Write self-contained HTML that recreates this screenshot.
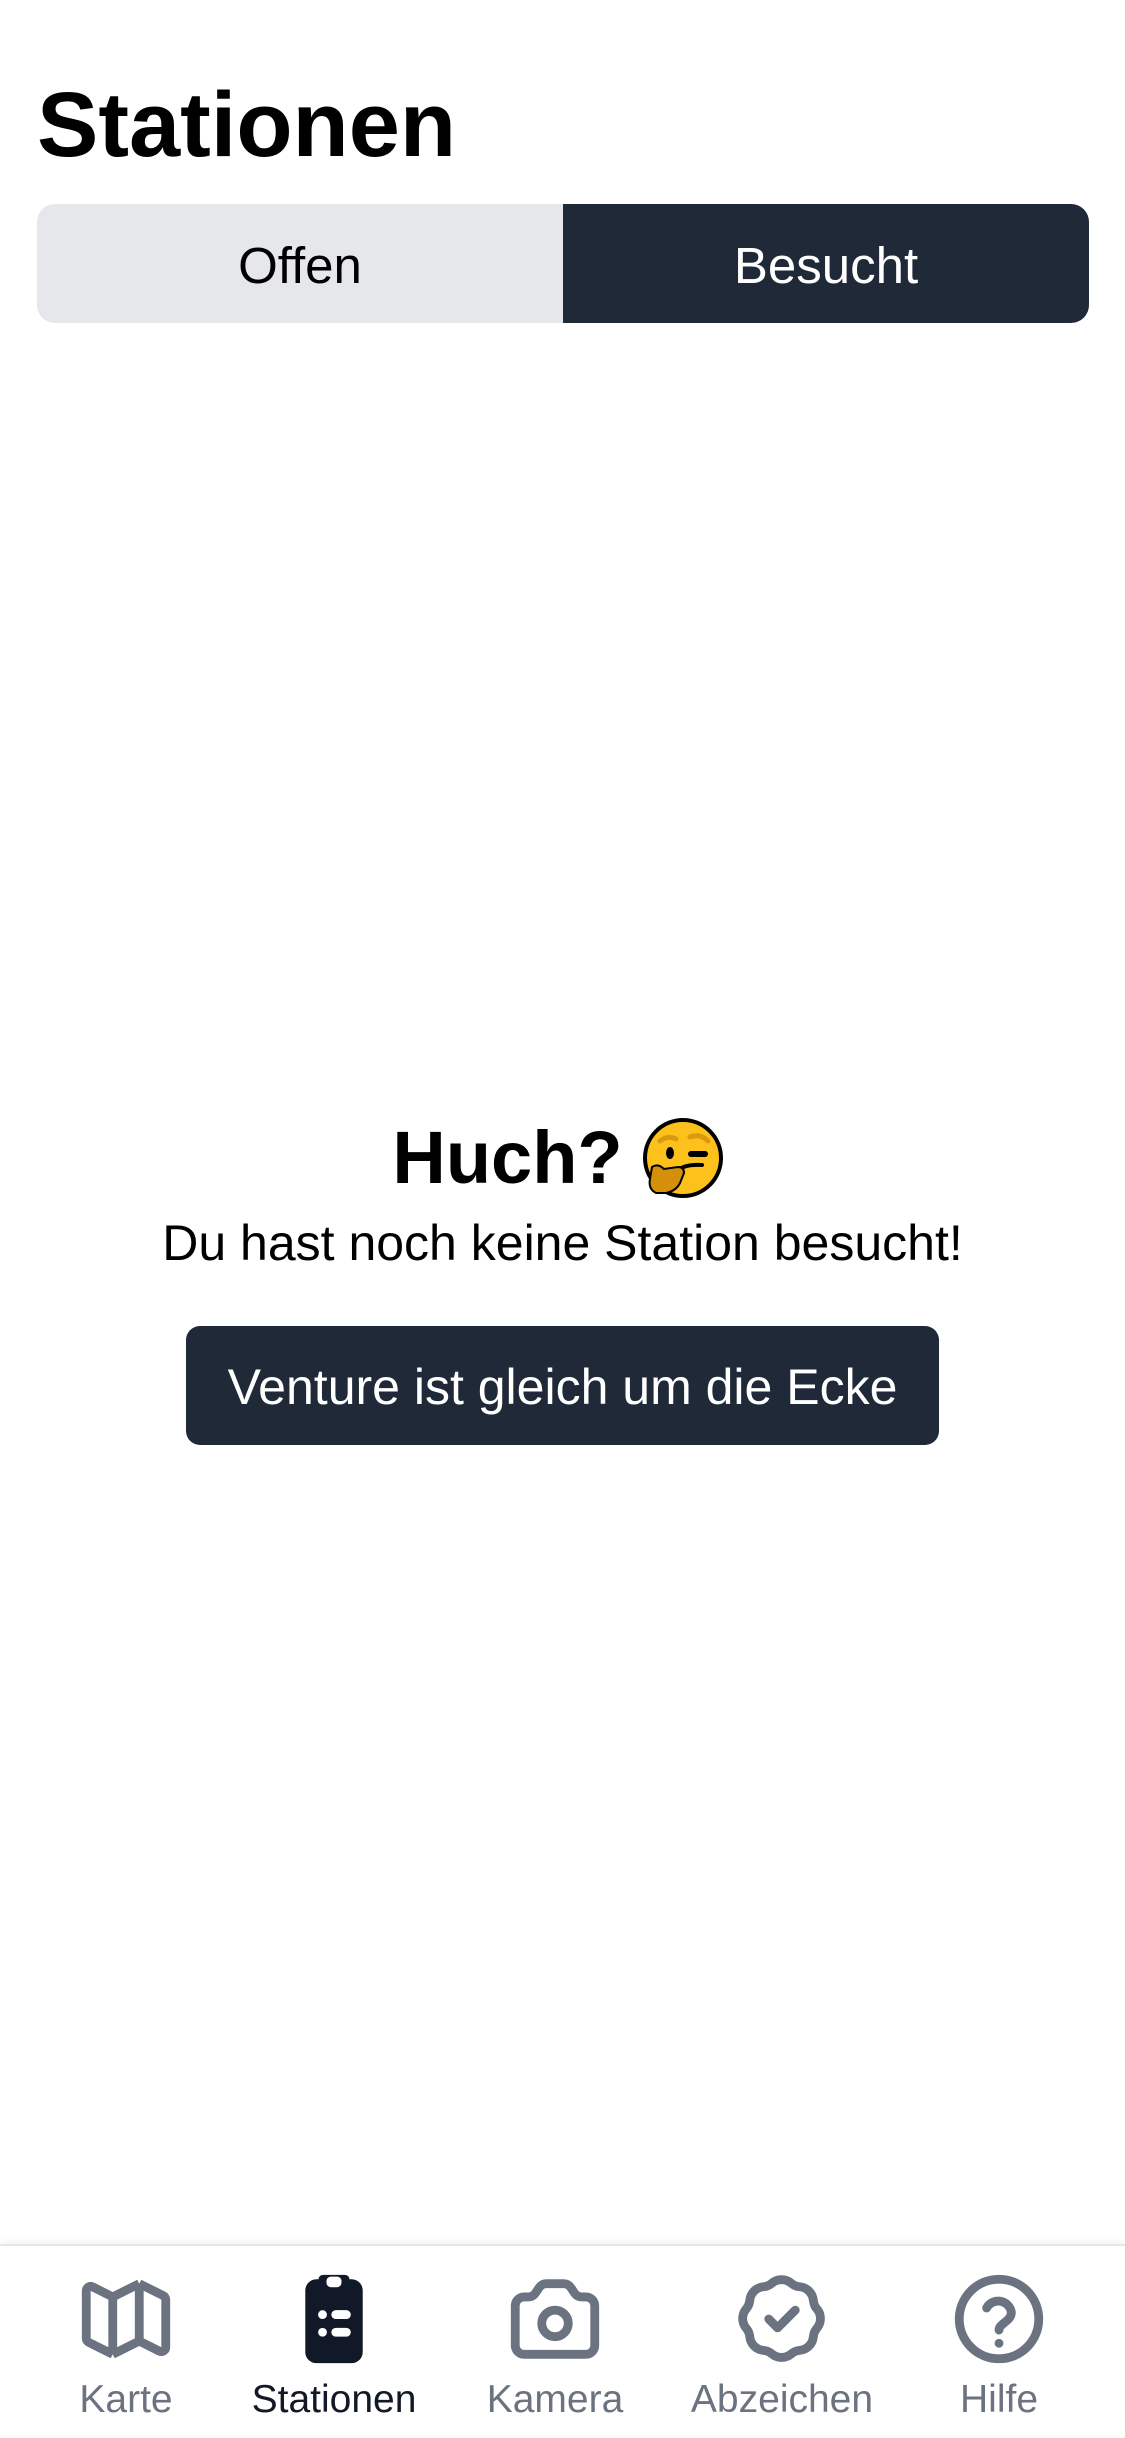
<!DOCTYPE html>
<html><head><meta charset="utf-8"><style>
html,body{margin:0;padding:0;background:#fff;}
body{width:1125px;height:2436px;position:relative;overflow:hidden;font-family:"Liberation Sans",sans-serif;}
.abs{position:absolute;}
h1{position:absolute;left:37px;top:70px;margin:0;font-size:92px;font-weight:bold;color:#000;line-height:110px;}
.seg{position:absolute;left:37px;top:204px;width:1052px;height:119px;border-radius:18px;overflow:hidden;background:#e5e7eb;}
.seg div{position:absolute;top:0;height:119px;line-height:124px;text-align:center;font-size:51px;}
.huch{position:absolute;left:0;width:1125px;top:1118px;text-align:center;font-size:74px;font-weight:bold;line-height:80px;}
.sub{position:absolute;left:0;width:1125px;top:1215px;text-align:center;font-size:50px;line-height:56px;color:#000;}
.btn{position:absolute;left:186px;top:1326px;width:753px;height:119px;background:#1f2937;border-radius:14px;color:#fff;font-size:50px;line-height:122px;text-align:center;}
.nav{position:absolute;left:0;top:2244px;width:1125px;height:192px;border-top:2px solid #e5e7eb;box-shadow:0 -2px 6px rgba(0,0,0,0.06);}
.item{position:absolute;top:20px;width:240px;margin-left:-120px;text-align:center;color:#6b7280;font-size:39px;}
.item svg{display:block;margin:0 auto;}
.item span{display:block;margin-top:6px;}
</style></head><body>
<h1>Stationen</h1>
<div class="seg">
<div style="left:0;width:526px;color:#000;">Offen</div>
<div style="left:526px;width:526px;background:#1f2937;color:#fff;">Besucht</div>
</div>
<div class="huch"><span style="position:relative;left:-55px;">Huch?</span></div>
<svg class="abs" style="left:640px;top:1115px" width="86" height="86" viewBox="0 0 86 86">
<circle cx="43" cy="43" r="38" fill="#fcc21b" stroke="#000" stroke-width="4"/>
<path d="M20 26 q8 -6 16 -2" stroke="#d99a10" stroke-width="5" fill="none" stroke-linecap="round"/>
<path d="M50 22 q10 -4 18 4" stroke="#d99a10" stroke-width="5" fill="none" stroke-linecap="round"/>
<ellipse cx="30" cy="38" rx="4" ry="6" fill="#000"/>
<path d="M51 39 h14" stroke="#000" stroke-width="6" stroke-linecap="round"/>
<path d="M38 55 q8 -6 24 -5" stroke="#000" stroke-width="4" fill="none" stroke-linecap="round"/>
<path d="M12 52 q6 -4 12 2 l14 -2 q6 0 6 6 l-4 10 q-4 8 -14 10 l-10 0 q-8 -4 -6 -14z" fill="#d68f0a" stroke="#000" stroke-width="2"/>
</svg>
<div class="sub">Du hast noch keine Station besucht!</div>
<div class="btn">Venture ist gleich um die Ecke</div>
<div class="nav">
<div class="item" style="left:126px;"><svg width="106" height="106" viewBox="0 0 24 24" fill="none" stroke="#6b7280" stroke-width="2" stroke-linejoin="round"><path d="M9 20l-5.4-2.7A1 1 0 013 16.4V5.6a1 1 0 011.4-.9L9 7m0 13l6-3m-6 3V7m6 10l4.6 2.3a1 1 0 001.4-.9V7.6a1 1 0 00-.6-.9L15 4m0 13V4m0 0L9 7"/></svg><span>Karte</span></div>
<div class="item" style="left:334px;color:#111827;"><svg width="106" height="106" viewBox="0 0 24 24"><path fill="#111827" d="M8.5 3a1 1 0 011-1h5a1 1 0 011 1h0.5A2.5 2.5 0 0118.5 5.5v14A2.5 2.5 0 0116 22H8A2.5 2.5 0 015.5 19.5v-14A2.5 2.5 0 018 3z"/><rect x="10.3" y="2.4" width="3.4" height="2.4" rx="1" fill="#fff"/><circle cx="9.4" cy="11" r="1" fill="#fff"/><circle cx="9.4" cy="15" r="1" fill="#fff"/><rect x="11.4" y="10" width="4.4" height="2" rx="1" fill="#fff"/><rect x="11.4" y="14" width="4.4" height="2" rx="1" fill="#fff"/></svg><span>Stationen</span></div>
<div class="item" style="left:555px;"><svg width="106" height="106" viewBox="0 0 24 24" fill="none" stroke="#6b7280" stroke-width="2" stroke-linejoin="round"><path d="M3 9a2 2 0 012-2h.9a2 2 0 001.7-.9l.8-1.2A2 2 0 0110.1 4h3.8a2 2 0 011.7.9l.8 1.2a2 2 0 001.7.9H19a2 2 0 012 2v9a2 2 0 01-2 2H5a2 2 0 01-2-2z"/><circle cx="12" cy="13" r="3"/></svg><span>Kamera</span></div>
<div class="item" style="left:782px;"><svg width="106" height="106" viewBox="0 0 24 24" fill="none" stroke="#6b7280" stroke-width="2" stroke-linejoin="round" stroke-linecap="round"><path d="M9 12l2 2 4-4M7.8 4.7a3.4 3.4 0 001.9-.8 3.4 3.4 0 014.4 0 3.4 3.4 0 001.9.8 3.4 3.4 0 013.1 3.1c.1.7.3 1.4.8 1.9a3.4 3.4 0 010 4.4 3.4 3.4 0 00-.8 1.9 3.4 3.4 0 01-3.1 3.1 3.4 3.4 0 00-1.9.8 3.4 3.4 0 01-4.4 0 3.4 3.4 0 00-1.9-.8 3.4 3.4 0 01-3.1-3.1 3.4 3.4 0 00-.8-1.9 3.4 3.4 0 010-4.4 3.4 3.4 0 00.8-1.9 3.4 3.4 0 013.1-3.1z"/></svg><span>Abzeichen</span></div>
<div class="item" style="left:999px;"><svg width="106" height="106" viewBox="0 0 24 24" fill="none" stroke="#6b7280" stroke-width="2" stroke-linecap="round" stroke-linejoin="round"><circle cx="12" cy="12" r="9"/><path d="M9.2 9.5a3 3 0 015.6 1c0 2-2.8 2.5-2.8 4M12 17.5h.01"/></svg><span>Hilfe</span></div>
</div>
</body></html>
